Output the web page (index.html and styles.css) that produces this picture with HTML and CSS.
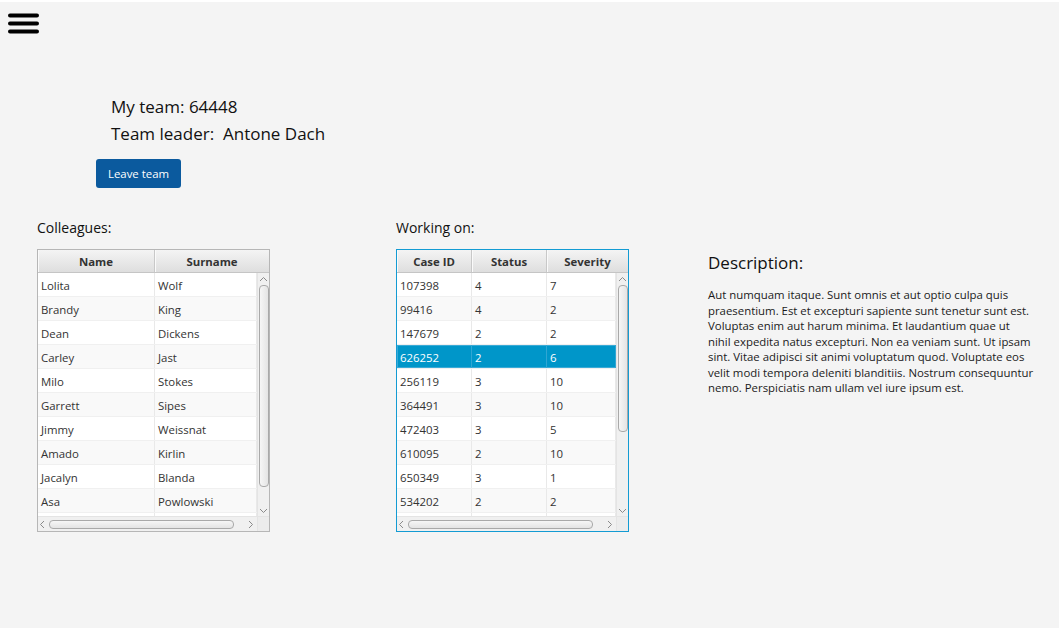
FILE: index.html
```html
<!DOCTYPE html>
<html lang="en">
<head>
<meta charset="utf-8">
<title>My team</title>
<link rel="stylesheet" href="styles.css">
</head>
<body>
<div class="app">
  <header class="topbar">
    <button class="menu" aria-label="Menu">
      <svg width="31" height="21" viewBox="0 0 31 21">
        <rect x="0" y="0.5" width="31" height="4" rx="2" fill="#000"/>
        <rect x="0" y="8.5" width="31" height="4" rx="2" fill="#000"/>
        <rect x="0" y="16.5" width="31" height="4" rx="2" fill="#000"/>
      </svg>
    </button>
  </header>

  <section class="team">
    <div class="team-line">My team: 64448</div>
    <div class="team-line">Team leader:&nbsp; Antone Dach</div>
    <button class="leave">Leave team</button>
  </section>

  <section class="panels">
    <div class="panel col-colleagues">
      <div class="label">Colleagues:</div>
      <div class="table t-colleagues">
        <div class="thead"><div class="th w-name">Name</div><div class="th w-surname last">Surname</div></div>
        <div class="tbody">
          <div class="rows">
            <div class="tr"><div class="td w-name">Lolita</div><div class="td w-surname">Wolf</div></div>
            <div class="tr"><div class="td w-name">Brandy</div><div class="td w-surname">King</div></div>
            <div class="tr"><div class="td w-name">Dean</div><div class="td w-surname">Dickens</div></div>
            <div class="tr"><div class="td w-name">Carley</div><div class="td w-surname">Jast</div></div>
            <div class="tr"><div class="td w-name">Milo</div><div class="td w-surname">Stokes</div></div>
            <div class="tr"><div class="td w-name">Garrett</div><div class="td w-surname">Sipes</div></div>
            <div class="tr"><div class="td w-name">Jimmy</div><div class="td w-surname">Weissnat</div></div>
            <div class="tr"><div class="td w-name">Amado</div><div class="td w-surname">Kirlin</div></div>
            <div class="tr"><div class="td w-name">Jacalyn</div><div class="td w-surname">Blanda</div></div>
            <div class="tr"><div class="td w-name">Asa</div><div class="td w-surname">Powlowski</div></div>
            <div class="tr"><div class="td w-name"></div><div class="td w-surname"></div></div>
          </div>
          <div class="vscroll">
            <svg class="arrow" width="9" height="6" viewBox="0 0 9 6"><polyline points="1,5 4.5,1.5 8,5" fill="none" stroke="#8a8a8a" stroke-width="1"/></svg>
            <div class="vtrack"><div class="vthumb thumb-long"></div></div>
            <svg class="arrow" width="9" height="6" viewBox="0 0 9 6"><polyline points="1,1 4.5,4.5 8,1" fill="none" stroke="#8a8a8a" stroke-width="1"/></svg>
          </div>
        </div>
        <div class="hbar">
          <div class="hscroll">
            <svg class="arrow" width="6" height="9" viewBox="0 0 6 9"><polyline points="5,1 1.5,4.5 5,8" fill="none" stroke="#8a8a8a" stroke-width="1"/></svg>
            <div class="htrack"><div class="hthumb"></div></div>
            <svg class="arrow" width="6" height="9" viewBox="0 0 6 9"><polyline points="1,1 4.5,4.5 1,8" fill="none" stroke="#8a8a8a" stroke-width="1"/></svg>
          </div>
          <div class="corner"></div>
        </div>
      </div>
    </div>

    <div class="panel col-cases">
      <div class="label">Working on:</div>
      <div class="table t-cases focused">
        <div class="thead"><div class="th w-id">Case ID</div><div class="th w-status">Status</div><div class="th w-sev last">Severity</div></div>
        <div class="tbody">
          <div class="rows">
            <div class="tr"><div class="td w-id">107398</div><div class="td w-status">4</div><div class="td w-sev">7</div></div>
            <div class="tr"><div class="td w-id">99416</div><div class="td w-status">4</div><div class="td w-sev">2</div></div>
            <div class="tr"><div class="td w-id">147679</div><div class="td w-status">2</div><div class="td w-sev">2</div></div>
            <div class="tr selected"><div class="td w-id">626252</div><div class="td w-status">2</div><div class="td w-sev">6</div></div>
            <div class="tr"><div class="td w-id">256119</div><div class="td w-status">3</div><div class="td w-sev">10</div></div>
            <div class="tr"><div class="td w-id">364491</div><div class="td w-status">3</div><div class="td w-sev">10</div></div>
            <div class="tr"><div class="td w-id">472403</div><div class="td w-status">3</div><div class="td w-sev">5</div></div>
            <div class="tr"><div class="td w-id">610095</div><div class="td w-status">2</div><div class="td w-sev">10</div></div>
            <div class="tr"><div class="td w-id">650349</div><div class="td w-status">3</div><div class="td w-sev">1</div></div>
            <div class="tr"><div class="td w-id">534202</div><div class="td w-status">2</div><div class="td w-sev">2</div></div>
            <div class="tr"><div class="td w-id"></div><div class="td w-status"></div><div class="td w-sev"></div></div>
          </div>
          <div class="vscroll">
            <svg class="arrow" width="9" height="6" viewBox="0 0 9 6"><polyline points="1,5 4.5,1.5 8,5" fill="none" stroke="#8a8a8a" stroke-width="1"/></svg>
            <div class="vtrack"><div class="vthumb thumb-short"></div></div>
            <svg class="arrow" width="9" height="6" viewBox="0 0 9 6"><polyline points="1,1 4.5,4.5 8,1" fill="none" stroke="#8a8a8a" stroke-width="1"/></svg>
          </div>
        </div>
        <div class="hbar">
          <div class="hscroll">
            <svg class="arrow" width="6" height="9" viewBox="0 0 6 9"><polyline points="5,1 1.5,4.5 5,8" fill="none" stroke="#8a8a8a" stroke-width="1"/></svg>
            <div class="htrack"><div class="hthumb"></div></div>
            <svg class="arrow" width="6" height="9" viewBox="0 0 6 9"><polyline points="1,1 4.5,4.5 1,8" fill="none" stroke="#8a8a8a" stroke-width="1"/></svg>
          </div>
          <div class="corner"></div>
        </div>
      </div>
    </div>

    <div class="panel col-desc">
      <h2 class="desc-title">Description:</h2>
      <p class="desc-text">Aut numquam itaque. Sunt omnis et aut optio culpa quis<br>praesentium. Est et excepturi sapiente sunt tenetur sunt est.<br>Voluptas enim aut harum minima. Et laudantium quae ut<br>nihil expedita natus excepturi. Non ea veniam sunt. Ut ipsam<br>sint. Vitae adipisci sit animi voluptatum quod. Voluptate eos<br>velit modi tempora deleniti blanditiis. Nostrum consequuntur<br>nemo. Perspiciatis nam ullam vel iure ipsum est.</p>
    </div>
  </section>
</div>
</body>
</html>
```

FILE: styles.css
```css
* { box-sizing: border-box; }

html, body {
  margin: 0;
  padding: 0;
}

body {
  background: #f4f4f4;
  font-family: "Open Sans", "Noto Sans", sans-serif;
  color: #1b1b1b;
  border-top: 2px solid #ffffff;
  height: 628px;
  overflow: hidden;
}

.topbar {
  padding: 11px 0 0 8px;
  height: 33px;
}

.menu {
  display: block;
  border: 0;
  padding: 0;
  margin: 0;
  background: transparent;
  width: 31px;
  height: 21px;
}
.menu svg { display: block; }

.team {
  margin-top: 58px;
  padding-left: 96px;
}

.team-line {
  margin-left: 15px;
  font-size: 17px;
  line-height: 27px;
  color: #111;
  white-space: pre;
}

.leave {
  display: block;
  margin-top: 12px;
  width: 85px;
  height: 29px;
  padding: 0;
  border: 0;
  border-radius: 3px;
  background: #0b5a9e;
  color: #fff;
  font-family: inherit;
  font-size: 11.4px;
}

.panels {
  display: flex;
  align-items: flex-start;
  margin-top: 30px;
  padding-left: 37px;
}

.label {
  font-size: 14px;
  line-height: 20px;
  color: #111;
  height: 20px;
  margin-bottom: 11px;
}

.col-colleagues { width: 233px; }
.col-cases { width: 233px; margin-left: 126px; }
.col-desc { margin-left: 79px; padding-top: 33px; }

/* Table */
.table {
  width: 233px;
  height: 283px;
  border: 1px solid #b6b6b6;
  background: #fff;
  display: flex;
  flex-direction: column;
  font-size: 11.4px;
  color: #333;
}
.table.focused {
  border-color: #139bd3;
  box-shadow: inset 0 0 0 1px #bfe3f3;
}

.thead {
  display: flex;
  height: 23px;
  flex: none;
  background: linear-gradient(#f4f4f4, #dedede);
  border-bottom: 1px solid #c5c5c5;
}
.th {
  font-weight: 700;
  text-align: center;
  line-height: 24px;
  color: #333;
  border-right: 1px solid #c8c8c8;
  box-shadow: inset 1px 0 0 #fafafa;
}
.th.last { border-right: 0; flex: 1; }

.tbody {
  display: flex;
  height: 243px;
  flex: none;
  overflow: hidden;
}
.rows {
  flex: 1;
  overflow: hidden;
}
.tr {
  display: flex;
  height: 24px;
  border-bottom: 1px solid #f0f0f0;
  background: #fff;
}
.tr:nth-child(even) { background: #f9f9f9; }
.td {
  padding-left: 3px;
  line-height: 25px;
  border-right: 1px solid #e9e9e9;
  white-space: nowrap;
  overflow: hidden;
}
.tr.selected {
  background: #0096c9;
  color: #fff;
  box-shadow: inset 0 0 0 1px #3aaad6;
}
.tr.selected .td { border-right-color: #30a6d3; }

.t-colleagues .th.w-name, .t-colleagues .td.w-name { width: 117px; }
.t-colleagues .td.w-surname { width: 102px; }

.t-cases .th.w-id, .t-cases .td.w-id { width: 75px; }
.t-cases .th.w-status, .t-cases .td.w-status { width: 75px; }
.t-cases .td.w-sev { width: 69px; }

/* Scrollbars */
.vscroll {
  width: 12px;
  flex: none;
  background: #f0f0f0;
  border-left: 1px solid #e4e4e4;
  display: flex;
  flex-direction: column;
  align-items: center;
}
.vscroll .arrow { display: block; flex: none; margin: 3px 0 2px; }
.vtrack { flex: 1; width: 100%; }
.vthumb {
  margin: 1px auto 0;
  width: 10px;
  border: 1px solid #a9a9a9;
  border-radius: 4px;
  background: linear-gradient(90deg, #f6f6f6, #e4e4e4);
}
.thumb-long { height: 202px; }
.thumb-short { height: 147px; }

.hbar {
  display: flex;
  height: 15px;
  flex: none;
  border-top: 1px solid #e4e4e4;
}
.hscroll {
  flex: 1;
  display: flex;
  align-items: center;
  background: #f0f0f0;
  padding: 0 3px 0 1px;
}
.hscroll .arrow { display: block; flex: none; }
.htrack { flex: 1; margin: 0 14px 0 4px; }
.hthumb {
  height: 9px;
  border: 1px solid #a9a9a9;
  border-radius: 4px;
  background: linear-gradient(#f6f6f6, #e4e4e4);
}
.corner {
  width: 12px;
  background: #ececec;
  border-left: 1px solid #e4e4e4;
}

/* Description */
.desc-title {
  margin: 0;
  font-weight: 400;
  font-size: 17px;
  line-height: 24px;
  color: #111;
}
.desc-text {
  margin: 12px 0 0;
  white-space: nowrap;
  font-size: 11.4px;
  line-height: 15.5px;
  color: #1b1b1b;
}
```
